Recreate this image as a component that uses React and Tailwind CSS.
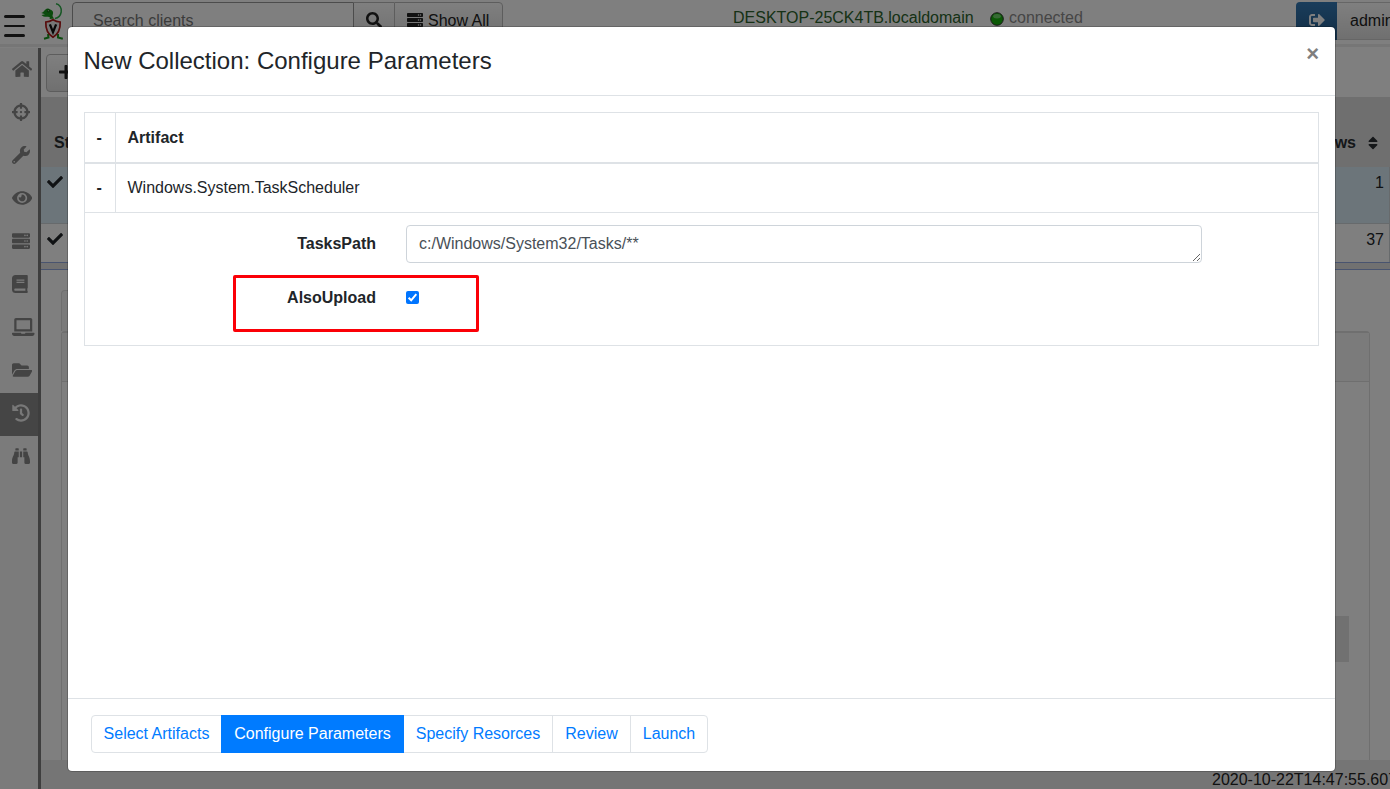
import React from "react";
import {
  FaHome, FaCrosshairs, FaWrench, FaEye, FaServer, FaBook, FaLaptop, FaFolderOpen,
  FaHistory, FaBinoculars, FaSearch, FaSignOutAlt, FaCheck, FaSort, FaPlus,
} from "react-icons/fa";

const NAV = [
  [FaHome, "h-[18px] w-[20.25px]"],
  [FaCrosshairs, "h-[18px] w-[18px]"],
  [FaWrench, "h-[18px] w-[18px]"],
  [FaEye, "h-[18px] w-[20.25px]"],
  [FaServer, "h-[18px] w-[18px]"],
  [FaBook, "h-[18px] w-[15.75px]"],
  [FaLaptop, "h-[18px] w-[22.5px]"],
  [FaFolderOpen, "h-[18px] w-[20.25px]"],
  [FaHistory, "h-[18px] w-[18px]"],
  [FaBinoculars, "h-[18px] w-[18px]"],
];

function Logo() {
  return (
    <svg className="ml-[15px] h-[38px] w-6 shrink-0" viewBox="0 0 24 38">
      <path d="M16 1.800 C19.500 2.500 22 6 21.200 10 C20.500 14 18 16 15 16.500" fill="none" stroke="#2fae4a" strokeWidth="1.500" />
      <path d="M1.200 11 C3 10.500 4 9 5.500 7.500 C6.500 6 9 6 10 7.500 C12.500 8 13.800 10 12.800 12.500 C12 14 13 15.500 14.500 16.500 L9.500 17 C10.500 15.500 9.500 14.800 8 14.800 C5 15 2.500 14.500 1.500 13 L5 12.300 Z" fill="#16961c" />
      <circle cx="8.300" cy="9" r="1.400" fill="#0a5a0a" />
      <circle cx="8.300" cy="8.700" r="0.600" fill="#bfe8bf" />
      <path d="M8 32 L8.500 35.500 L4 36.700 M18 32 L18 35.500 L22.800 36.700" fill="none" stroke="#16961c" strokeWidth="2" />
      <path d="M5.800 20 C9 20 11 19 13 17.800 C15 19 17 20 20.200 20 C20.500 27 18.500 32 13 35.200 C7.500 32 5.500 27 5.800 20 Z" fill="#eeeeee" stroke="#b01818" strokeWidth="1.700" />
      <path d="M9.900 22.300 L13 30.200 L16.100 22.300" fill="none" stroke="#111" strokeWidth="2.300" />
    </svg>
  );
}

function TopBar() {
  return (
    <header className="flex h-[47px] shrink-0 items-start border-b-[3px] border-[#ececec]">
      <div className="ml-1 mt-[15px] flex w-[21px] shrink-0 flex-col gap-[7px]">
        <span className="h-[2.5px] rounded-sm bg-[#222]" />
        <span className="h-[2.5px] rounded-sm bg-[#222]" />
        <span className="h-[2.5px] rounded-sm bg-[#222]" />
      </div>
      <div className="mt-[2px]"><Logo /></div>
      <div className="ml-2 mt-[2px] flex h-[38px] w-[431px] shrink-0">
        <div className="flex w-[282px] items-center rounded-l border border-[#999] pl-5 text-[#777]">Search clients</div>
        <div className="flex w-[40px] items-center justify-center border-y border-[#bbb] bg-gradient-to-b from-white to-[#e0e0e0]">
          <FaSearch className="-mt-[2px] h-4 w-4 text-[#222]" />
        </div>
        <div className="flex w-[109px] items-center gap-[5px] rounded-r border border-[#bbb] bg-gradient-to-b from-white to-[#e0e0e0] pl-3 text-[#222]">
          <FaServer className="-mt-[2px] h-4 w-4" />
          Show All
        </div>
      </div>
      <div className="ml-[230px] mt-[6px] flex shrink-0 items-center">
        <span className="w-[257px] text-[#2c642c]">DESKTOP-25CK4TB.localdomain</span>
        <svg className="mt-[2px] h-[14px] w-[14px]" viewBox="0 0 14 14">
          <circle cx="7" cy="7" r="6.300" fill="#16b20c" stroke="#333" strokeWidth="1" />
          <ellipse cx="7" cy="4.200" rx="3.800" ry="2.200" fill="#6fd469" />
        </svg>
        <span className="ml-[5px] text-[#8c8c8c]">connected</span>
      </div>
      <div className="ml-auto mt-[2px] flex h-[38px] w-[94px] shrink-0 overflow-hidden">
        <div className="flex w-[41px] shrink-0 items-center justify-center rounded-l bg-gradient-to-b from-[#337ab7] to-[#265a88]">
          <FaSignOutAlt className="-mt-[2px] h-4 w-4 text-white" />
        </div>
        <div className="flex flex-1 items-center whitespace-nowrap border-y border-[#ccc] bg-gradient-to-b from-white to-[#e0e0e0] pl-[13px] text-[#222]">admin</div>
      </div>
    </header>
  );
}

function Sidebar() {
  return (
    <nav className="mt-px flex w-[41px] shrink-0 flex-col border-r-[3px] border-[#7c7c7c] bg-[#f6f6f6] pt-px">
      {NAV.map(([Icon, size], i) => (
        <div key={i} className={i === 8 ? "flex h-[43px] shrink-0 items-center bg-[#8a8a8a] pb-1 pl-3 text-[#f0f0f0]" : "flex h-[43px] shrink-0 items-center pb-1 pl-3 text-[#888]"}>
          <Icon className={size} />
        </div>
      ))}
    </nav>
  );
}

function Workspace() {
  return (
    <main className="flex min-w-0 flex-1 flex-col">
      <div className="h-[50px] shrink-0 pl-[5px] pt-[7px]">
        <div className="flex h-[38px] w-[42px] items-center rounded border border-[#bbb] bg-gradient-to-b from-white to-[#e0e0e0] pl-[11px]">
          <FaPlus className="-mt-[2px] h-4 w-4 text-[#222]" />
        </div>
      </div>
      <div className="flex h-[70px] shrink-0 items-center justify-between bg-[#dfdfdf] pl-[13px] pr-[12px] pt-[21px] font-bold text-[#2b2f33]">
        <span>State</span>
        <span className="flex items-center gap-3">Rows <FaSort className="h-4 w-[10px]" /></span>
      </div>
      <div className="flex h-[57px] shrink-0 items-start justify-between border-b border-r border-[#cfd4d8] bg-[#d9ebf5] pl-[6px] pr-[5px] pt-1">
        <FaCheck className="mt-[3px] h-4 w-4" />
        <span>1</span>
      </div>
      <div className="flex h-[38px] shrink-0 items-start justify-between border-r border-[#cfd4d8] pl-[6px] pr-[5px] pt-1">
        <FaCheck className="mt-[3px] h-4 w-4" />
        <span>37</span>
      </div>
      <div className="h-2 shrink-0 border-y border-[#93a9df] bg-[#e2e2e2]" />
      <div className="flex min-h-0 flex-1 flex-col pl-5 pr-5 pt-5">
        <div className="h-[41px] w-[120px] shrink-0 rounded-t border border-b-0 border-[#dedede] bg-[#f7f7f7]" />
        <div className="flex flex-1 flex-col rounded-t border border-b-0 border-[#dedede]">
          <div className="h-[50px] border-b border-t border-[#dedede] bg-[#f7f7f7]" />
          <div className="ml-5 mr-5 mt-[234px] h-[46px] bg-[#e2e2e2]" />
        </div>
      </div>
      <footer className="flex h-[29px] shrink-0 items-center overflow-hidden bg-[#ebebeb] pl-[1171px] pt-[10px] text-[#222]">
        <span className="whitespace-nowrap">2020-10-22T14:47:55.607Z</span>
      </footer>
    </main>
  );
}

function Modal() {
  return (
    <div className="relative flex h-[746px] w-[1269px] flex-col rounded-[5px] border border-black/20 bg-white bg-clip-padding text-[#212529]">
      <div className="flex h-[69px] shrink-0 items-start justify-between border-b border-[#dee2e6] pl-[15.5px] pr-4">
        <h4 className="mt-4 text-2xl leading-9">New Collection: Configure Parameters</h4>
        <span className="mt-[15px] text-[22px] font-bold leading-6 text-[#7f7f7f]">×</span>
      </div>
      <div className="flex-1 px-4 pt-4">
        <div className="h-[234px] w-[1235px] border border-[#dee2e6]">
          <div className="flex h-[51px] items-stretch border-b-2 border-[#dee2e6] font-bold">
            <div className="flex w-[31px] items-center border-r border-[#dee2e6] pl-[11.5px]">-</div>
            <div className="flex items-center pl-[11.5px]">Artifact</div>
          </div>
          <div className="flex h-[49px] items-stretch border-b border-[#dee2e6]">
            <div className="flex w-[31px] items-center border-r border-[#dee2e6] pl-[11.5px] font-bold">-</div>
            <div className="flex items-center pl-[11.5px]">Windows.System.TaskScheduler</div>
          </div>
          <div className="flex pt-3">
            <label className="w-[291px] pt-[7px] text-right font-bold">TasksPath</label>
            <textarea readOnly rows={1} defaultValue="c:/Windows/System32/Tasks/**" className="ml-[30px] h-[38px] w-[796px] overflow-hidden rounded border border-[#ced4da] px-3 py-[6px] leading-6 text-[#495057]" />
          </div>
          <div className="mt-4 flex">
            <label className="w-[291px] pt-[7px] text-right font-bold">AlsoUpload</label>
            <div className="ml-[30px] mt-[12px] h-[13px] w-[13px] rounded-[2px] bg-[#0075ff]">
              <svg viewBox="0 0 13 13" className="h-full w-full">
                <path d="M2.600 6.800 L5.200 9.300 L10.300 3.200" fill="none" stroke="#fff" strokeWidth="2" />
              </svg>
            </div>
          </div>
        </div>
      </div>
      <div className="flex h-[73px] shrink-0 border-t border-[#dee2e6] pl-[23px] pt-4">
        <div className="flex h-[38px] w-[617px] rounded border border-[#dee2e6] text-[#007bff]">
          <div className="flex w-[129px] items-center justify-center">Select Artifacts</div>
          <div className="-my-px flex w-[183px] items-center justify-center bg-[#007bff] text-white">Configure Parameters</div>
          <div className="flex w-[149px] items-center justify-center border-r border-[#dee2e6]">Specify Resorces</div>
          <div className="flex w-[78px] items-center justify-center border-r border-[#dee2e6]">Review</div>
          <div className="flex flex-1 items-center justify-center">Launch</div>
        </div>
      </div>
      <div className="absolute left-[165px] top-[248px] h-[57px] w-[246px] rounded-[2px] border-[3px] border-[#fb0007]" />
    </div>
  );
}

export default function App() {
  return (
    <div className="relative h-[789px] w-[1390px] overflow-hidden bg-white font-['Liberation_Sans',Arial,sans-serif] text-base leading-6 text-[#212529]">
      <div className="flex h-full flex-col">
        <TopBar />
        <div className="flex min-h-0 flex-1">
          <Sidebar />
          <Workspace />
        </div>
      </div>
      <div className="absolute inset-0 bg-black/50 pl-[67px] pt-[26px]">
        <Modal />
      </div>
    </div>
  );
}
